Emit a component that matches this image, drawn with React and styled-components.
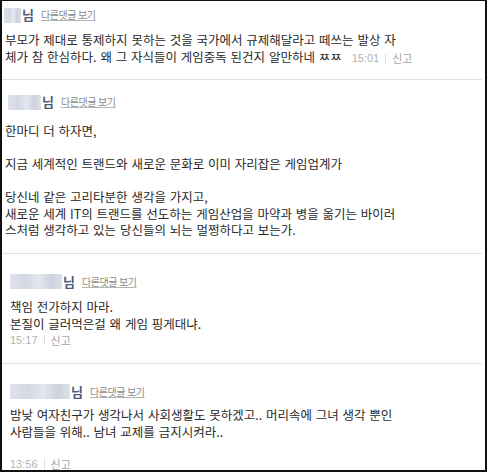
import React from "react";
import styled, { createGlobalStyle } from "styled-components";

const Global = createGlobalStyle`
  html, body { margin: 0; padding: 0; background: #fff; }
  body { font-family: "Noto Sans CJK KR", "Noto Sans", sans-serif; }
`;

const Frame = styled.div`
  box-sizing: border-box;
  width: 487px;
  height: 472px;
  overflow: hidden;
  background: #fff;
  border-top: 1px solid #111;
  border-left: 2px solid #111;
  border-right: 2px solid #111;
  border-bottom: 2px solid #111;
  display: flex;
  flex-direction: column;
`;

const Comment = styled.section`
  padding: ${(p) => p.$pt}px 4px ${(p) => p.$pb}px ${(p) => p.$pl}px;
  border-bottom: ${(p) => (p.$last ? "none" : "1px solid #e1e1e1")};
  margin-right: 3px;
  flex: ${(p) => (p.$last ? "1" : "none")};
  display: flex;
  flex-direction: column;
`;

const NameRow = styled.div`
  display: flex;
  align-items: center;
  height: 16px;
  padding-left: ${(p) => p.$nl}px;
`;

const Blur = styled.span`
  display: inline-block;
  width: ${(p) => p.$w}px;
  height: 15px;
  background: linear-gradient(
    90deg,
    #dfe2ea 0%,
    #d3d8e3 30%,
    #e4e7ee 55%,
    #ccd2de 80%,
    #dde1e9 100%
  );
`;

const Nim = styled.span`
  font-size: 13px;
  font-weight: 700;
  color: #4d5a7a;
  line-height: 16px;
  margin-left: 1px;
`;

const OtherLink = styled.a`
  font-size: 10px;
  color: #8c8c8c;
  text-decoration: underline;
  text-decoration-color: #b5b5b5;
  letter-spacing: -0.4px;
  margin-left: 7px;
  line-height: 16px;
`;

const Body = styled.div`
  margin-top: ${(p) => p.$mt}px;
  font-size: 12.5px;
  line-height: ${(p) => p.$lh}px;
  color: #2a2a2a;
  word-spacing: 1px;
  white-space: nowrap;
`;

const Line = styled.div`
  min-height: ${(p) => p.$h || 0}px;
`;

const Meta = styled.span`
  display: inline-flex;
  align-items: center;
  margin-left: ${(p) => p.$ml || 0}px;
  margin-top: ${(p) => p.$mt || 0}px;
  font-family: "Liberation Sans", Arial, sans-serif;
  font-size: 11px;
  line-height: ${(p) => p.$lh || 16}px;
  word-spacing: 0;
`;

const Time = styled.span`
  color: #b3b3b3;
`;

const Sep = styled.span`
  display: inline-block;
  width: 1px;
  height: 10px;
  background: #dcdcdc;
  margin: 0 6px;
`;

const Report = styled.span`
  color: #a5a5a5;
  font-family: "Noto Sans CJK KR", sans-serif;
  font-size: 11px;
`;

function Name({ w, nl }) {
  return (
    <NameRow $nl={nl}>
      <Blur $w={w} />
      <Nim>님</Nim>
      <OtherLink>다른댓글 보기</OtherLink>
    </NameRow>
  );
}

function MetaInfo({ time, ...rest }) {
  return (
    <Meta {...rest}>
      <Time>{time}</Time>
      <Sep />
      <Report>신고</Report>
    </Meta>
  );
}

export default function App() {
  return (
    <>
      <Global />
      <Frame>
        <Comment $pt={6} $pb={12} $pl={1}>
          <Name w={17} nl={1} />
          <Body $mt={8} $lh={17} style={{ paddingLeft: 2 }}>
            <Line>부모가 제대로 통제하지 못하는 것을 국가에서 규제해달라고 떼쓰는 발상 자</Line>
            <Line>
              체가 참 한심하다. 왜 그 자식들이 게임중독 된건지 알만하네 ㅉㅉ
              <MetaInfo time="15:01" $ml={10} $lh={17} />
            </Line>
          </Body>
        </Comment>

        <Comment $pt={14} $pb={14} $pl={3}>
          <Name w={33} nl={3} />
          <Body $mt={13} $lh={16.5}>
            <Line>한마디 더 하자면,</Line>
            <Line $h={16.5} />
            <Line>지금 세계적인 트랜드와 새로운 문화로 이미 자리잡은 게임업계가</Line>
            <Line $h={16.5} />
            <Line>당신네 같은 고리타분한 생각을 가지고,</Line>
            <Line>새로운 세계 IT의 트랜드를 선도하는 게임산업을 마약과 병을 옮기는 바이러</Line>
            <Line>스처럼 생각하고 있는 당신들의 뇌는 멀쩡하다고 보는가.</Line>
          </Body>
        </Comment>

        <Comment $pt={20} $pb={15} $pl={8}>
          <Name w={52} nl={0} />
          <Body $mt={8} $lh={17}>
            <Line>책임 전가하지 마라.</Line>
            <Line>본질이 글러먹은걸 왜 게임 핑게대냐.</Line>
          </Body>
          <MetaInfo time="15:17" $lh={16} />
        </Comment>

        <Comment $pt={20} $pb={0} $pl={8} $last>
          <Name w={60} nl={0} />
          <Body $mt={6} $lh={17}>
            <Line>밤낮 여자친구가 생각나서 사회생활도 못하겠고.. 머리속에 그녀 생각 뿐인</Line>
            <Line>사람들을 위해.. 남녀 교제를 금지시켜라..</Line>
          </Body>
          <MetaInfo time="13:56" $mt={18} $lh={12} />
        </Comment>
      </Frame>
    </>
  );
}
